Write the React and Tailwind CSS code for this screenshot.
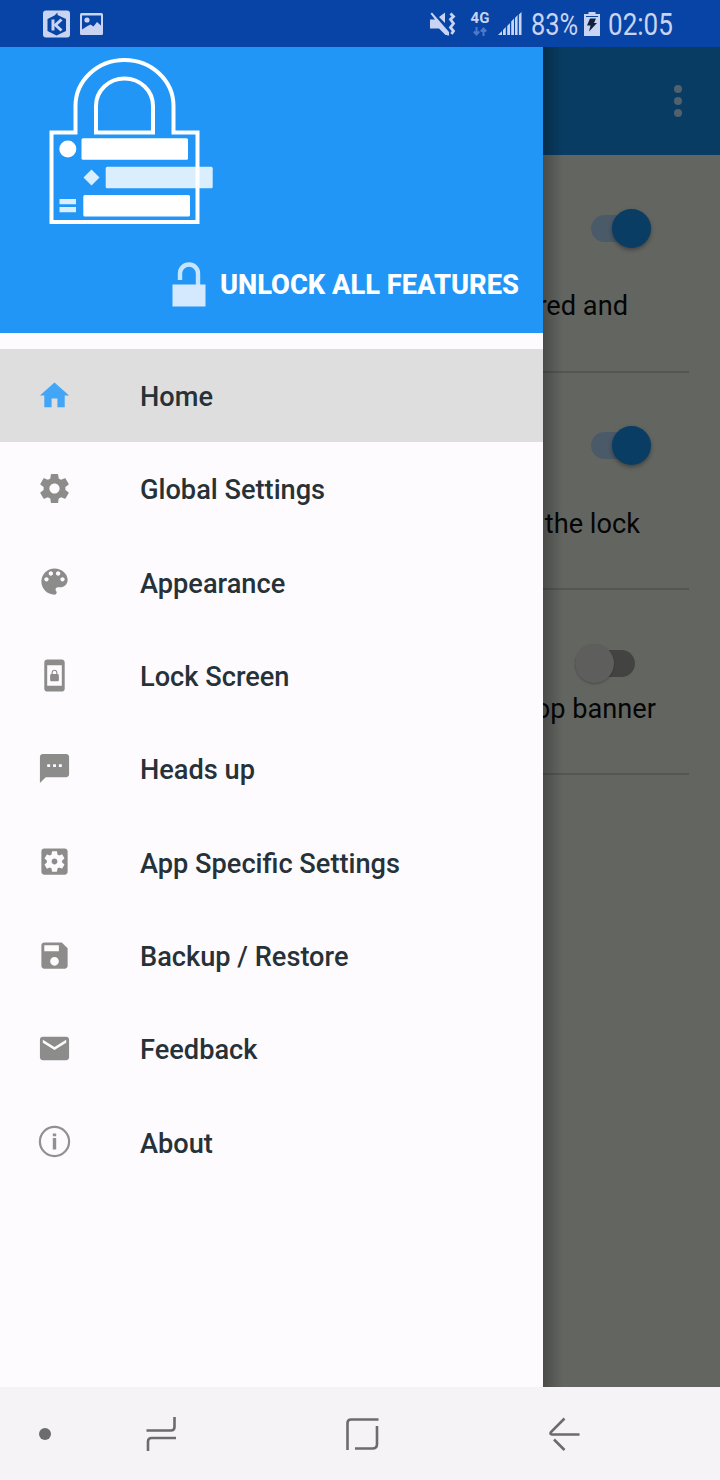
import clsx from 'clsx';

const ICONS = {
  home: 'M10 20v-6h4v6h5v-8h3L12 3 2 12h3v8z',
  settings:
    'M19.43 12.98c.04-.32.07-.64.07-.98s-.03-.66-.07-.98l2.11-1.65c.19-.15.24-.42.12-.64l-2-3.46c-.12-.22-.39-.3-.61-.22l-2.49 1c-.52-.4-1.08-.73-1.69-.98l-.38-2.65C14.46 2.18 14.25 2 14 2h-4c-.25 0-.46.18-.49.42l-.38 2.65c-.61.25-1.17.59-1.69.98l-2.49-1c-.23-.09-.49 0-.61.22l-2 3.46c-.13.22-.07.49.12.64l2.11 1.65c-.04.32-.07.65-.07.98s.03.66.07.98l-2.11 1.65c-.19.15-.24.42-.12.64l2 3.46c.12.22.39.3.61.22l2.49-1c.52.4 1.08.73 1.69.98l.38 2.65c.03.24.24.42.49.42h4c.25 0 .46-.18.49-.42l.38-2.65c.61-.25 1.17-.59 1.69-.98l2.49 1c.23.09.49 0 .61-.22l2-3.46c.12-.22.07-.49-.12-.64l-2.11-1.65zM12 15.5c-1.93 0-3.5-1.57-3.5-3.5s1.57-3.5 3.5-3.5 3.5 1.57 3.5 3.5-1.57 3.5-3.5 3.5z',
  palette:
    'M12 3c-4.97 0-9 4.03-9 9s4.03 9 9 9c.83 0 1.5-.67 1.5-1.5 0-.39-.15-.74-.39-1.01-.23-.26-.38-.61-.38-.99 0-.83.67-1.5 1.5-1.5H16c2.76 0 5-2.24 5-5 0-4.42-4.03-8-9-8zm-5.5 9c-.83 0-1.5-.67-1.5-1.5S5.67 9 6.5 9 8 9.67 8 10.5 7.33 12 6.5 12zm3-4C8.67 8 8 7.33 8 6.5S8.67 5 9.5 5s1.5.67 1.5 1.5S10.33 8 9.5 8zm5 0c-.83 0-1.5-.67-1.5-1.5S13.67 5 14.5 5s1.5.67 1.5 1.5S15.33 8 14.5 8zm3 4c-.83 0-1.5-.67-1.5-1.5S16.67 9 17.5 9s1.5.67 1.5 1.5-.67 1.5-1.5 1.5z',
  lockScreen:
    'M10 16h4c.55 0 1-.45 1-1v-3c0-.55-.45-1-1-1v-1c0-1.11-.9-2-2-2-1.11 0-2 .9-2 2v1c-.55 0-1 .45-1 1v3c0 .55.45 1 1 1zm.8-6c0-.66.54-1.2 1.2-1.2.66 0 1.2.54 1.2 1.2v1h-2.4v-1zM17 1H7c-1.1 0-2 .9-2 2v18c0 1.1.9 2 2 2h10c1.1 0 2-.9 2-2V3c0-1.1-.9-2-2-2zm0 18H7V5h10v14z',
  sms: 'M20 2H4c-1.1 0-1.99.9-1.99 2L2 22l4-4h14c1.1 0 2-.9 2-2V4c0-1.1-.9-2-2-2zM9 11H7V9h2v2zm4 0h-2V9h2v2zm4 0h-2V9h2v2z',
  appSettings:
    'M12 10c-1.1 0-2 .9-2 2s.9 2 2 2 2-.9 2-2-.9-2-2-2zm7-7H5c-1.11 0-2 .9-2 2v14c0 1.1.89 2 2 2h14c1.11 0 2-.9 2-2V5c0-1.1-.89-2-2-2zm-1.75 9c0 .23-.02.46-.05.68l1.48 1.16c.13.11.17.3.08.45l-1.4 2.42c-.09.15-.27.21-.43.15l-1.74-.7c-.36.28-.76.51-1.18.69l-.26 1.85c-.03.17-.18.3-.35.3h-2.8c-.17 0-.32-.13-.35-.29l-.26-1.85c-.43-.18-.82-.41-1.18-.69l-1.74.7c-.16.06-.34 0-.43-.15l-1.4-2.42c-.09-.15-.05-.34.08-.45l1.48-1.16c-.03-.23-.05-.46-.05-.69 0-.23.02-.46.05-.68l-1.48-1.16c-.13-.11-.17-.3-.08-.45l1.4-2.42c.09-.15.27-.21.43-.15l1.74.7c.36-.28.76-.51 1.18-.69l.26-1.85c.03-.17.18-.3.35-.3h2.8c.17 0 .32.13.35.29l.26 1.85c.43.18.82.41 1.18.69l1.74-.7c.16-.06.34 0 .43.15l1.4 2.42c.09.15.05.34-.08.45l-1.48 1.16c.03.23.05.46.05.69z',
  save: 'M17 3H5c-1.11 0-2 .9-2 2v14c0 1.1.89 2 2 2h14c1.1 0 2-.9 2-2V7l-4-4zm-5 16c-1.66 0-3-1.34-3-3s1.34-3 3-3 3 1.34 3 3-1.34 3-3 3zm3-10H5V5h10v4z',
  email: 'M20 4H4c-1.1 0-1.99.9-1.99 2L2 18c0 1.1.9 2 2 2h16c1.1 0 2-.9 2-2V6c0-1.1-.9-2-2-2zm0 4l-8 5-8-5V6l8 5 8-5v2z',
};

const MENU = [
  { label: 'Home', icon: 'home', active: true },
  { label: 'Global Settings', icon: 'settings' },
  { label: 'Appearance', icon: 'palette' },
  { label: 'Lock Screen', icon: 'lockScreen' },
  { label: 'Heads up', icon: 'sms' },
  { label: 'App Specific Settings', icon: 'appSettings' },
  { label: 'Backup / Restore', icon: 'save' },
  { label: 'Feedback', icon: 'email' },
  { label: 'About', icon: 'info' },
];

function MenuIcon({ name, active }) {
  if (name === 'info') {
    return (
      <svg className="w-[35px] h-[35px] text-[#929094]" viewBox="0 0 35 35" fill="none">
        <circle cx="17.5" cy="17.5" r="14.6" stroke="currentColor" strokeWidth="2.2" />
        <path d="M15.8 9.6h3.4v2.6h-3.4zM15.8 14h3.4v11.5h-3.4z" fill="currentColor" />
      </svg>
    );
  }
  return (
    <svg
      className={clsx('w-[35px] h-[35px]', active ? 'text-[#42a5f5]' : 'text-[#8c8d8b]')}
      viewBox="0 0 24 24"
      fill="currentColor"
    >
      <path d={ICONS[name]} />
    </svg>
  );
}

function StatusBar() {
  return (
    <div className="h-[47px] shrink-0 bg-[#0844a6] text-[#c9d3f2] flex items-center">
      <svg className="w-[27px] h-[28px] ml-[43px]" viewBox="0 0 27 28">
        <rect x="0" y="0.5" width="27" height="27" rx="3" fill="currentColor" />
        <path d="M14.5 2.5V5L23 9v12l-9.5 4.5-9-4.5V9l7-3.5z" fill="#0844a6" />
        <path d="M10 9.5v11" fill="none" stroke="currentColor" strokeWidth="3" />
        <path d="M18.5 9.5l-6 5.5 6 5.5" fill="none" stroke="currentColor" strokeWidth="3" />
      </svg>
      <svg className="w-[23px] h-[22px] ml-[10px]" viewBox="0 0 23 22">
        <rect width="23" height="22" rx="1.5" fill="currentColor" />
        <path d="M2 2.5h19v10L17 9l-3.5 4.5-3-2-3 1.5L2 16.500z" fill="#0844a6" />
        <circle cx="7" cy="7" r="2.6" fill="currentColor" />
      </svg>
      <svg className="w-[26px] h-[24px] ml-[327px]" viewBox="0 0 26 24" fill="currentColor">
        <path d="M0 7.5h5l3.5 3L18 20v3h-2.5L9 16.500H0zM9 5l6-4.500V11zM.5 1.800L2 .5l17 19.500v3.500h-1.500z" />
        <path d="M20.5 1.5l3 3-3 3 3 4-3 4 3 3.5-2 3" fill="none" stroke="currentColor" strokeWidth="2.8" />
      </svg>
      <div className="w-[20px] ml-[14px] flex flex-col items-center">
        <span className="text-[15px] leading-[13px] font-bold">4G</span>
        <svg className="w-[14px] h-[9px] mt-[2px] text-[#4f79c8]" viewBox="0 0 14 9" fill="none" stroke="currentColor" strokeWidth="2">
          <path d="M3.5 0v7M.8 4.500l2.700 3 2.700-3M10.500 9V2M7.800 4.500l2.700-3 2.700 3" />
        </svg>
      </div>
      <svg className="w-[24px] h-[23px] ml-[8px]" viewBox="0 0 24 23" fill="currentColor">
        <path d="M0 23l4-4v4zM5 18l2.800-3v8H5zM9.200 14l2.800-3v12H9.200zM13.200 9.500l2.800-3V23h-2.800zM17 6l2.600-3v20H17zM20.900 2.500L23.500 0v23h-2.600z" />
      </svg>
      <div className="w-[47px] ml-[9px]">
        <span className="block w-[60px] origin-left scale-x-[0.82] text-[31px] leading-[46px] pt-[2px]">83%</span>
      </div>
      <svg className="w-[16px] h-[24px] ml-[6px]" viewBox="0 0 16 24">
        <path d="M4.5 0h7v2H16v22H0V2h4.5z" fill="currentColor" />
        <path d="M2 4.5h12" stroke="#0844a6" strokeWidth="1" />
        <path d="M6 6.500h6L10 11h3L5 19.500l1.500-6H3z" fill="#13203c" />
      </svg>
      <div className="w-[66px] ml-[8px]">
        <span className="block w-[80px] origin-left scale-x-[0.84] text-[31px] leading-[46px] pt-[2px]">02:05</span>
      </div>
    </div>
  );
}

function Toggle({ on }) {
  return (
    <div className={clsx('w-[62px] h-[40px] flex items-center', on ? 'justify-end' : 'justify-start')}>
      <div
        className={clsx(
          'w-[60px] h-[27px] rounded-full flex items-center',
          on ? 'bg-[#4b5a69] justify-end' : 'bg-[#434441] justify-start'
        )}
      >
        <div
          className={clsx(
            'w-[39px] h-[39px] shrink-0 rounded-full',
            on
              ? 'bg-[#093d63] shadow-[0_2px_4px_rgba(0,0,0,0.35)]'
              : 'bg-[#5e5f5c] shadow-[0_1px_2px_rgba(0,0,0,0.25)]'
          )}
        />
      </div>
    </div>
  );
}

function HomePage() {
  return (
    <div className="h-full bg-[#636561] text-[27.2px] leading-[32px] text-[#050505] flex flex-col">
      <div className="h-[108px] bg-[#083c62] flex justify-end items-center pr-[38.5px]">
        <div className="flex flex-col gap-[4px]">
          <span className="size-[8px] rounded-full bg-[#51616e]" />
          <span className="size-[8px] rounded-full bg-[#51616e]" />
          <span className="size-[8px] rounded-full bg-[#51616e]" />
        </div>
      </div>
      <div className="mr-[31px] h-[218px] border-b-2 border-[#555653] flex flex-col items-end pt-[53px]">
        <div className="mr-[38px]"><Toggle on /></div>
        <p className="mt-[42px] mr-[61px]">red and</p>
      </div>
      <div className="mr-[31px] h-[217px] border-b-2 border-[#555653] flex flex-col items-end pt-[52px]">
        <div className="mr-[38px]"><Toggle on /></div>
        <p className="mt-[43px] mr-[49px]">the lock</p>
      </div>
      <div className="mr-[31px] h-[185px] border-b-2 border-[#555653] flex flex-col items-end pt-[53px]">
        <div className="mr-[52px]"><Toggle /></div>
        <p className="mt-[10px] mr-[33px]">op banner</p>
      </div>
    </div>
  );
}

function Logo() {
  return (
    <svg className="w-[180px] h-[180px]" viewBox="40 50 180 180" fill="none">
      <g stroke="#fff" strokeWidth="4">
        <path d="M51.5 132.5h24V106a49 46 0 0 1 98 0v26.5h24V222h-146z" />
        <path d="M96 132.500V106a28.500 27.500 0 0 1 57 0v26.500z" />
      </g>
      <g fill="#fff">
        <circle cx="67.8" cy="149" r="8.5" />
        <rect x="81.5" y="138.3" width="106.5" height="21.4" rx="1.5" />
        <rect x="83.3" y="195" width="106.7" height="21.4" rx="1.5" />
      </g>
      <g fill="#fff" fillOpacity="0.84">
        <path d="M91.5 169.5l8 8-8 8-8-8z" />
        <rect x="105.7" y="166.7" width="107" height="21.6" rx="1.5" />
        <path d="M59.5 199H76v5.300H59.500zM59.500 207H76v5.300H59.500z" />
      </g>
    </svg>
  );
}

function Drawer() {
  return (
    <aside className="absolute inset-y-0 left-0 w-[543px] bg-[#fefbff]">
      <div className="h-[286px] bg-[#2196f6] flex flex-col justify-between">
        <div className="pl-[40px] pt-[3px]"><Logo /></div>
        <div className="flex items-center justify-end pr-[24px] pb-[26px]">
          <svg className="w-[34px] h-[45px]" viewBox="0 0 34 45" fill="none">
            <path d="M8 18v-6.500a9 9 0 0 1 18 0V24" stroke="#c5e4fd" strokeWidth="4.4" />
            <rect x="0.5" y="22.5" width="33" height="22" fill="#d5e9fe" />
          </svg>
          <span className="ml-[14px] pt-px text-[27.3px] leading-[32px] font-extrabold text-white whitespace-nowrap">
            UNLOCK ALL FEATURES
          </span>
        </div>
      </div>
      <nav className="pt-[15.5px]">
        {MENU.map((item) => (
          <div
            key={item.label}
            className={clsx('h-[93.33px] pl-[37px] flex items-center', item.active && 'bg-[#dedede]')}
          >
            <MenuIcon name={item.icon} active={item.active} />
            <span className="ml-[68px] pt-[4px] text-[27.2px] leading-[32px] font-medium text-[#263238]">
              {item.label}
            </span>
          </div>
        ))}
      </nav>
    </aside>
  );
}

function NavBar() {
  return (
    <div className="h-[93px] shrink-0 bg-[#f6f3f7] text-[#6c6c6c] flex items-center">
      <span className="size-[12px] ml-[39px] rounded-full bg-[#6c6c6c]" />
      <svg className="w-[32px] h-[36px] ml-[94px]" viewBox="0 0 32 36" fill="none" stroke="currentColor" strokeWidth="2.6">
        <path d="M1.5 14.5H26q3.500 0 3.500-3.500V1M31 22H6.500Q3 22 3 25.500V35" />
      </svg>
      <svg className="w-[34px] h-[34px] ml-[168px]" viewBox="0 0 34 34" fill="none" stroke="currentColor" strokeWidth="2.6">
        <path d="M2.5 33V6q0-3.500 3.500-3.500h27.500M32 9v18q0 4.500-4.500 4.500H10" />
      </svg>
      <svg className="w-[32px] h-[36px] ml-[169px]" viewBox="0 0 32 36" fill="none" stroke="currentColor" strokeWidth="2.6">
        <path d="M16.5 2.5L3 16q-1.500 2.500 1 2.500h27.500M6 23.500L16.500 34" />
      </svg>
    </div>
  );
}

export default function App() {
  return (
    <div className="w-[720px] h-[1480px] overflow-hidden flex flex-col font-['Roboto',sans-serif]">
      <StatusBar />
      <main className="relative flex-1 min-h-0">
        <HomePage />
        {/* drawer edge shadow */}
        <div className="absolute inset-y-0 left-[543px] w-[20px] bg-linear-to-r from-black/25 to-transparent" />
        <Drawer />
      </main>
      <NavBar />
    </div>
  );
}
